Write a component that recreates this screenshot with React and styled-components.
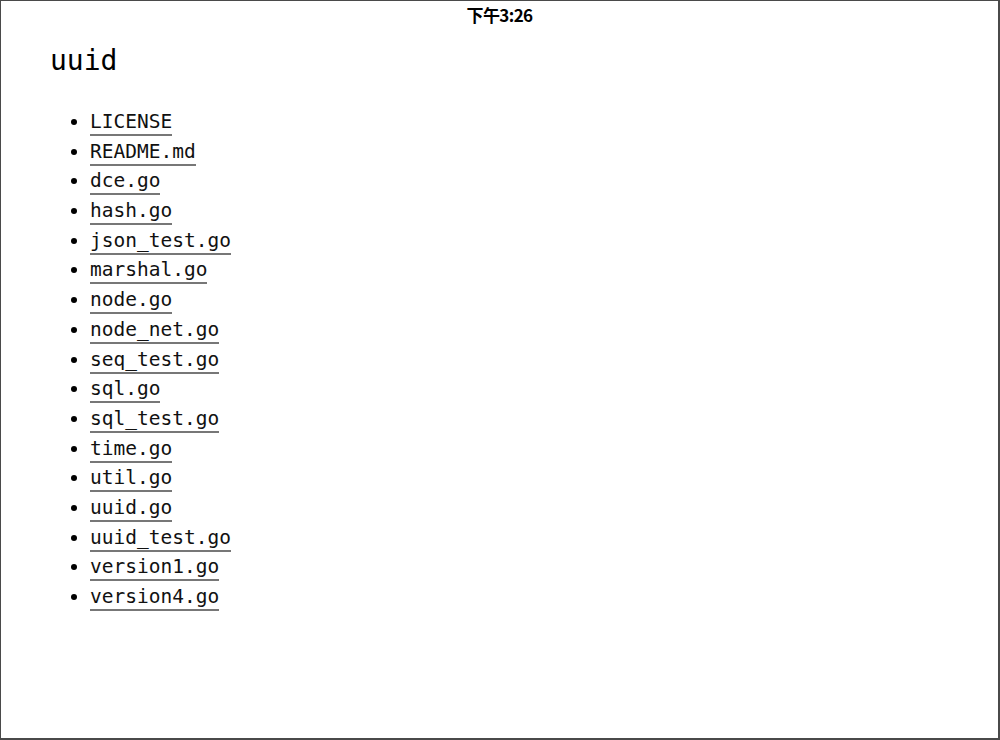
import React from "react"
import styled, { createGlobalStyle } from 'styled-components'

const GlobalStyle = createGlobalStyle`
  html, body {
    margin: 0;
    padding: 0;
    background: #fff;
  }
`

const Frame = styled.div`
  box-sizing: border-box;
  width: 1000px;
  height: 740px;
  border: 1px solid #4a4a4a;
  border-width: 1px 2px 2px 1px;
  background: #fff;
  color: #000;
`

const StatusBar = styled.div`
  height: 26px;
  display: flex;
  align-items: center;
  justify-content: center;
  font-family: "Noto Sans CJK SC", "Noto Sans", sans-serif;
  font-weight: 700;
  font-size: 17px;
  letter-spacing: -0.6px;
`

const Page = styled.div`
  padding: 16px 49px;
`

const Title = styled.h1`
  margin: 0 0 30px;
  font-family: "DejaVu Sans Mono", "Liberation Mono", monospace;
  font-weight: 400;
  font-size: 28px;
  line-height: 36px;
`

const FileList = styled.ul`
  margin: 0;
  padding-left: 40px;
  font-family: "DejaVu Sans Mono", "Liberation Mono", monospace;
  font-size: 19.5px;
`

const FileItem = styled.li`
  height: 29.7px;
  line-height: 26px;
`

const FileLink = styled.a`
  color: #111;
  text-decoration: none;
  border-bottom: 2px solid #777;
  padding-bottom: 1px;
`

const files = [
  'LICENSE', 'README.md', 'dce.go', 'hash.go', 'json_test.go', 'marshal.go',
  'node.go', 'node_net.go', 'seq_test.go', 'sql.go', 'sql_test.go', 'time.go',
  'util.go', 'uuid.go', 'uuid_test.go', 'version1.go', 'version4.go',
]

export default () => {
  return <Frame>
    <GlobalStyle />
    <StatusBar>下午3:26</StatusBar>
    <Page>
      <Title>uuid</Title>
      <FileList>
        {files.map(f => <FileItem key={f}><FileLink href='#'>{f}</FileLink></FileItem>)}
      </FileList>
    </Page>
  </Frame>
}
